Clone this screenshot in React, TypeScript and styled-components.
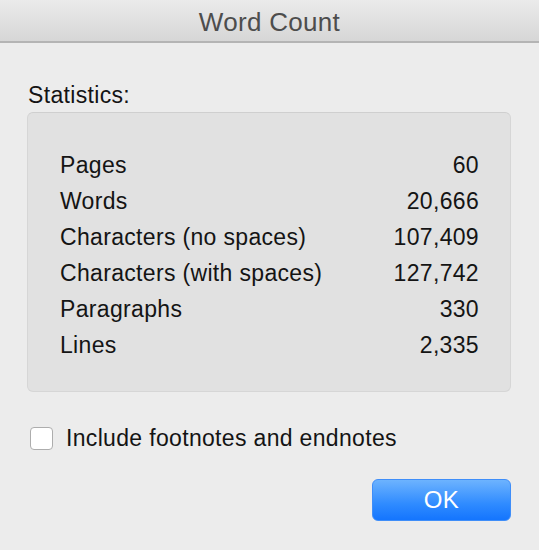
import React from "react";
import styled, { createGlobalStyle } from "styled-components";

const GlobalStyle = createGlobalStyle`
  html, body {
    margin: 0;
    padding: 0;
    background: #ececec;
  }
  body {
    font-family: "Liberation Sans", Arial, Helvetica, sans-serif;
    -webkit-font-smoothing: antialiased;
  }
  * { box-sizing: border-box; }
`;

const Window = styled.div`
  width: 539px;
  height: 550px;
  background: #ececec;
  display: flex;
  flex-direction: column;
  overflow: hidden;
`;

const TitleBar = styled.div`
  height: 43px;
  padding-top: 3px;
  background: linear-gradient(#ebebeb, #d6d6d6);
  border-bottom: 2px solid #b4b4b4;
  display: flex;
  justify-content: center;
`;

const Title = styled.div`
  font-size: 26px;
  line-height: 38px;
  letter-spacing: 0.3px;
  color: #4d4d4d;
`;

const Content = styled.div`
  padding: 0 28px 0 27px;
  display: flex;
  flex-direction: column;
  color: #141414;
  font-size: 23px;
  letter-spacing: 0.33px;
`;

const SectionLabel = styled.div`
  margin-top: 39px;
  margin-left: 1px;
  line-height: 27px;
`;

const StatsBox = styled.div`
  margin-top: 3px;
  background: #e1e1e1;
  border: 1px solid #d6d6d6;
  border-top-color: #cfcfcf;
  border-radius: 6px;
  padding: 34px 31px 28px 32px;
  display: flex;
  flex-direction: column;
`;

const StatRow = styled.div`
  display: flex;
  justify-content: space-between;
  line-height: 36px;
  height: 36px;
`;

const CheckRow = styled.label`
  margin-top: 33px;
  display: flex;
  align-items: center;
  gap: 13px;
  height: 27px;
  line-height: 27px;
`;

const CheckBox = styled.span`
  margin-left: 3px;
  width: 23px;
  height: 23px;
  background: #ffffff;
  border: 1.5px solid #adadad;
  border-radius: 4px;
  flex: none;
`;

const ButtonRow = styled.div`
  margin-top: 27px;
  display: flex;
  justify-content: flex-end;
`;

const OkButton = styled.button`
  width: 139px;
  height: 42px;
  border: 1px solid #3f8ef9;
  border-radius: 6px;
  background: linear-gradient(#6db3fe, #2f8bff 60%, #1475fe);
  color: #ffffff;
  font-family: "Liberation Sans", Arial, Helvetica, sans-serif;
  font-size: 24px;
  letter-spacing: 0.3px;
  padding: 0;
  line-height: 40px;
`;

const stats: [string, string][] = [
  ["Pages", "60"],
  ["Words", "20,666"],
  ["Characters (no spaces)", "107,409"],
  ["Characters (with spaces)", "127,742"],
  ["Paragraphs", "330"],
  ["Lines", "2,335"],
];

export default function App() {
  return (
    <Window>
      <GlobalStyle />
      <TitleBar>
        <Title>Word Count</Title>
      </TitleBar>
      <Content>
        <SectionLabel>Statistics:</SectionLabel>
        <StatsBox>
          {stats.map(([label, value]) => (
            <StatRow key={label}>
              <span>{label}</span>
              <span>{value}</span>
            </StatRow>
          ))}
        </StatsBox>
        <CheckRow>
          <CheckBox />
          <span>Include footnotes and endnotes</span>
        </CheckRow>
        <ButtonRow>
          <OkButton>OK</OkButton>
        </ButtonRow>
      </Content>
    </Window>
  );
}
